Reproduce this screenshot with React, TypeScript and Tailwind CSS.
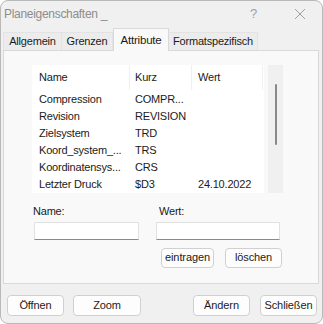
import { useState } from "react";

type Attr = { name: string; kurz: string; wert: string };

const attributes: Attr[] = [
  { name: "Compression", kurz: "COMPR...", wert: "" },
  { name: "Revision", kurz: "REVISION", wert: "" },
  { name: "Zielsystem", kurz: "TRD", wert: "" },
  { name: "Koord_system_...", kurz: "TRS", wert: "" },
  { name: "Koordinatensys...", kurz: "CRS", wert: "" },
  { name: "Letzter Druck", kurz: "$D3", wert: "24.10.2022" },
];

const tabs = ["Allgemein", "Grenzen", "Attribute", "Formatspezifisch"];

function Button({ label, className }: { label: string; className: string }) {
  return (
    <button
      className={`flex items-center justify-center rounded-[4px] border border-[#d0d0d0] bg-[#fdfdfd] text-[11px] tracking-[-0.1px] text-[#1b1b1b] ${className}`}
    >
      {label}
    </button>
  );
}

export default function App() {
  const [active] = useState("Attribute");

  return (
    <div
      className="flex h-[324px] w-[323px] flex-col overflow-hidden rounded-lg border border-[#b9b9b9] bg-[#f0f0f0] text-[11px] tracking-[-0.2px] text-[#1b1b1b]"
      style={{ fontFamily: '"Liberation Sans", Arial, sans-serif' }}
    >
      {/* title bar */}
      <div className="flex h-[27px] items-center pb-[2px] pl-[3px]">
        <span className="text-[12px] tracking-[-0.3px] text-[#8c8c8c]">Planeigenschaften _</span>
        <span className="ml-auto mr-[37px] text-[13px] font-light text-[#a0a0a0]">?</span>
        <svg width="12" height="12" viewBox="0 0 12 12" className="mr-[16px]">
          <path d="M1 1 L11 11 M11 1 L1 11" stroke="#a0a0a0" strokeWidth="1" />
        </svg>
      </div>

      {/* tabs */}
      <div className="flex h-[22px] items-end pl-[2px]">
        {tabs.map((t) =>
          t === active ? (
            <div
              key={t}
              className="relative z-10 -mb-px flex h-[23px] w-[56px] items-start justify-center border border-b-0 border-[#d9d9d9] bg-[#f9f9f9] pt-[3px] text-[11.5px]"
            >
              {t}
            </div>
          ) : (
            <div
              key={t}
              className={`flex h-[18px] items-center justify-center border-r border-t border-[#e3e3e3] bg-[#ececec] text-[11px] ${
                t === "Allgemein"
                  ? "w-[59px] border-l"
                  : t === "Grenzen"
                  ? "w-[51px]"
                  : "w-[89px]"
              }`}
            >
              {t}
            </div>
          )
        )}
      </div>

      {/* panel */}
      <div className="ml-[2px] flex h-[234px] w-[316px] flex-col border border-[#d9d9d9] bg-[#f9f9f9] pl-[28px] pt-[14px]">
        <div className="flex">
          <div className="h-[128px] w-[232px] bg-white">
            <div className="flex h-[25px] items-center">
              <div className="flex h-full w-[98px] items-center border-r border-[#f0f0f0] pl-[7px]">Name</div>
              <div className="flex h-full w-[62px] items-center border-r border-[#f0f0f0] pl-[5px]">Kurz</div>
              <div className="flex h-full w-[71px] items-center border-r border-[#f0f0f0] pl-[6px]">Wert</div>
            </div>
            <div className="mt-[1px]">
              {attributes.map((a) => (
                <div key={a.name} className="flex h-[17px] items-center">
                  <div className="w-[98px] pl-[7px]">{a.name}</div>
                  <div className="w-[62px] pl-[5px]">{a.kurz}</div>
                  <div className="w-[71px] pl-[6px]">{a.wert}</div>
                </div>
              ))}
            </div>
          </div>
          <div className="ml-[4px] flex h-[128px] w-[15px] justify-center bg-[#f0f0f0] pt-[19px]">
            <div className="h-[61px] w-[2px] rounded-full bg-[#8a8a8a]" />
          </div>
        </div>

        <div className="mt-[10px] flex">
          <div className="flex w-[124px] flex-col">
            <span className="pl-[1px]">Name:</span>
            <div className="ml-[2px] mt-[2px] h-[18px] w-[105px] border border-[#e1e1e1] border-b-[#8a8a8a] bg-white" />
          </div>
          <div className="flex flex-col">
            <span className="pl-[3px]">Wert:</span>
            <div className="mt-[2px] h-[18px] w-[124px] border border-[#e1e1e1] border-b-[#8a8a8a] bg-white" />
          </div>
        </div>

        <div className="mt-[8px] flex pl-[129px]">
          <Button label="eintragen" className="h-[20px] w-[53px]" />
          <Button label="löschen" className="ml-[11px] h-[20px] w-[57px]" />
        </div>
      </div>

      {/* bottom buttons */}
      <div className="mt-[11px] flex pl-[6px]">
        <Button label="Öffnen" className="h-[21px] w-[57px]" />
        <Button label="Zoom" className="ml-[9px] h-[21px] w-[68px]" />
        <Button label="Ändern" className="ml-[52px] h-[21px] w-[57px]" />
        <Button label="Schließen" className="ml-[10px] h-[21px] w-[57px]" />
      </div>
    </div>
  );
}
